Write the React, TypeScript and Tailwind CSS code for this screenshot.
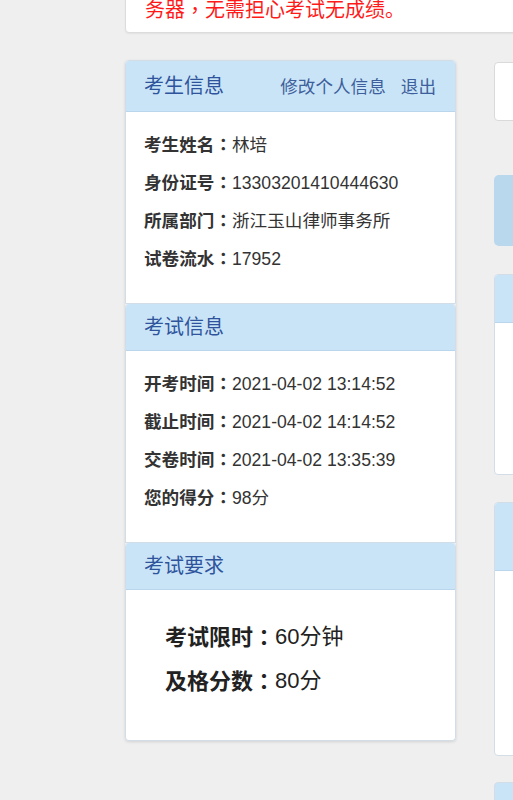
import React from 'react'

interface Row {
  label: string
  value: string
}

const studentRows: Row[] = [
  { label: '考生姓名', value: '林培' },
  { label: '身份证号', value: '13303201410444630' },
  { label: '所属部门', value: '浙江玉山律师事务所' },
  { label: '试卷流水', value: '17952' },
]

const examRows: Row[] = [
  { label: '开考时间', value: '2021-04-02 13:14:52' },
  { label: '截止时间', value: '2021-04-02 14:14:52' },
  { label: '交卷时间', value: '2021-04-02 13:35:39' },
  { label: '您的得分', value: '98分' },
]

// full-width colon centred in its box, like the original page font
const Colon = () => <span className="font-['Noto_Sans_CJK_TC',sans-serif]">：</span>

const InfoRows = ({ rows }: { rows: Row[] }) => (
  <div className="pt-[14px] pb-[25px] pl-[18px] text-[17.6px] text-[#333]">
    {rows.map((r) => (
      <div key={r.label} className="flex h-[38px] items-center whitespace-nowrap">
        <span className="font-bold">
          {r.label}
          <Colon />
        </span>
        <span>{r.value}</span>
      </div>
    ))}
  </div>
)

const App = () => {
  return (
    <div className="min-h-screen w-[513px] overflow-hidden bg-[#efefef] font-['Liberation_Sans','Noto_Sans_CJK_SC',sans-serif]">
      <div className="ml-[125px] w-[700px]">
        {/* notice card, mostly scrolled off the top */}
        <div className="mt-[-20px] rounded-[4px] border border-[#dcdcdc] bg-white pt-[14px] pb-[7px] pl-[19px] shadow-[0_1px_2px_rgba(0,0,0,0.06)]">
          <p className="flex h-[30px] items-center text-[20px] text-[#ff1a1a]">
            <span>务器</span>
            <span className="font-['Noto_Sans_CJK_TC',sans-serif]">，</span>
            <span>无需担心考试无成绩。</span>
          </p>
        </div>

        <div className="mt-[27px] flex items-start gap-[38px]">
          {/* left column */}
          <div className="w-[331px] shrink-0 rounded-[4px] shadow-[0_1px_3px_rgba(0,0,0,0.12)]">
            <div className="overflow-hidden rounded-t-[4px] border border-[#d3dde7] bg-white">
              <div className="flex h-[51px] items-center justify-between border-b border-[#bad6ec] bg-[#c9e4f7] pr-[19px] pl-[18px]">
                <span className="text-[20px] text-[#2f549c]">考生信息</span>
                <div className="flex gap-[15px] pt-[2px] text-[17.6px] text-[#3e5f9b]">
                  <span>修改个人信息</span>
                  <span>退出</span>
                </div>
              </div>
              <InfoRows rows={studentRows} />
            </div>

            <div className="overflow-hidden rounded-t-[4px] border-x border-b border-[#d3dde7] bg-white">
              <div className="flex h-[47px] items-center border-b border-[#bad6ec] bg-[#c9e4f7] pl-[18px]">
                <span className="text-[20px] text-[#2f549c]">考试信息</span>
              </div>
              <InfoRows rows={examRows} />
            </div>

            <div className="overflow-hidden rounded-[4px] border-x border-b border-[#d3dde7] bg-white">
              <div className="flex h-[47px] items-center border-b border-[#bad6ec] bg-[#c9e4f7] pl-[18px]">
                <span className="text-[20px] text-[#2f549c]">考试要求</span>
              </div>
              <div className="pt-[24px] pb-[38px] pl-[39px] text-[22px] text-[#222]">
                <div className="flex h-[44px] items-center whitespace-nowrap">
                  <span className="font-bold">
                    考试限时
                    <Colon />
                  </span>
                  <span>60分钟</span>
                </div>
                <div className="flex h-[44px] items-center whitespace-nowrap">
                  <span className="font-bold">
                    及格分数
                    <Colon />
                  </span>
                  <span>80分</span>
                </div>
              </div>
            </div>
          </div>

          {/* right column, cut off by the window */}
          <div className="flex w-[300px] shrink-0 flex-col">
            <div className="mt-[2px] h-[59px] rounded-[4px] border border-[#dadada] bg-white"></div>
            <div className="mt-[54px] h-[71px] rounded-[5px] bg-[#b9d7ed]"></div>
            <div className="mt-[28px] overflow-hidden rounded-[4px] border border-[#d3dde7] bg-white">
              <div className="h-[48px] border-b border-[#bad6ec] bg-[#c9e4f7]"></div>
              <div className="h-[151px]"></div>
            </div>
            <div className="mt-[27px] overflow-hidden rounded-[4px] border border-[#d3dde7] bg-white">
              <div className="h-[68px] border-b border-[#bad6ec] bg-[#c9e4f7]"></div>
              <div className="h-[184px]"></div>
            </div>
            <div className="mt-[26px] h-[60px] rounded-t-[4px] border border-[#d3dde7] bg-[#c9e4f7]"></div>
          </div>
        </div>
      </div>
    </div>
  )
}

export default App
